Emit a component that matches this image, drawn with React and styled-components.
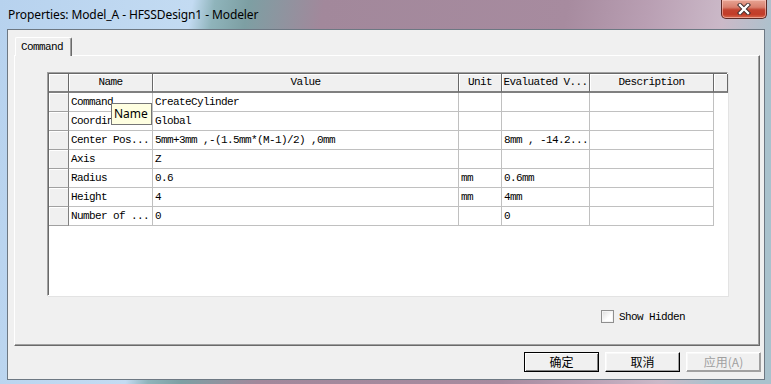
import React from "react";
import styled, { createGlobalStyle } from "styled-components";

const Global = createGlobalStyle`
  * { box-sizing: border-box; }
  html, body { margin: 0; padding: 0; overflow: hidden; }
  body { width: 771px; height: 384px; background: #b8d2ec; }
`;

const Window = styled.div`
  width: 771px;
  height: 384px;
  display: flex;
  flex-direction: column;
  padding: 0 6px 4px 7px;
  background:
    linear-gradient(180deg, rgba(255,255,255,0) 0, rgba(255,255,255,0) 29px, rgba(190,214,240,0.0) 29px),
    linear-gradient(100deg, #b7d2ee 0, #c3dbf2 190px, #8fb4bb 212px, #7d9fa3 245px, #a2889b 320px, #a78b9f 560px, #b99fb3 640px, #cbb9c8 715px, #a9c2cd 771px);
`;

const TitleBar = styled.div`
  height: 29px;
  display: flex;
  align-items: flex-start;
  justify-content: space-between;
  margin-left: -7px;
  margin-right: -6px;
  padding-left: 8px;
`;

const Title = styled.div`
  font-family: "Noto Sans", "Open Sans", sans-serif;
  font-size: 12px;
  line-height: 16px;
  margin-top: 7px;
  color: #000;
  letter-spacing: -0.1px;
`;

const CloseButton = styled.div`
  width: 46px;
  height: 19px;
  margin-right: 4px;
  border: 1px solid #5c2a26;
  border-top: none;
  border-radius: 0 0 5px 5px;
  background: linear-gradient(180deg, #e7a493 0, #d9806e 40%, #c2422f 55%, #c23c28 80%, #d76a4e 100%);
  box-shadow: inset 0 0 0 1px rgba(255, 210, 200, 0.55);
  display: flex;
  align-items: center;
  justify-content: center;
`;

const Client = styled.div`
  flex: 1;
  display: flex;
  flex-direction: column;
  background: #f0f0f0;
  border: 1px solid #6d7883;
  padding: 7px 3px 0 0;
`;

const TabStrip = styled.div`
  display: flex;
  padding-left: 7px;
  position: relative;
  z-index: 1;
`;

const Tab = styled.div`
  width: 57px;
  height: 19px;
  margin-bottom: -1px;
  background: #f0f0f0;
  border-left: 1px solid #ffffff;
  border-top: 1px solid #ffffff;
  border-right: 1px solid #6a6a6a;
  box-shadow: inset -1px 0 0 #a0a0a0;
  border-radius: 2px 2px 0 0;
  font-family: "Liberation Mono", "DejaVu Sans Mono", monospace;
  font-size: 11px;
  letter-spacing: -0.6px;
  line-height: 16px;
  padding-left: 5px;
  padding-top: 1px;
`;

const Panel = styled.div`
  margin-left: 6px;
  width: 746px;
  height: 291px;
  border-top: 1px solid #ffffff;
  border-left: 1px solid #ffffff;
  border-right: 1px solid #6a6a6a;
  border-bottom: 1px solid #6a6a6a;
  box-shadow: inset -1px -1px 0 #a0a0a0;
  display: flex;
  flex-direction: column;
  padding: 16px 0 0 32px;
`;

const Grid = styled.div`
  position: relative;
  width: 681px;
  height: 224px;
  background: #ffffff;
  border-top: 1px solid #a0a0a0;
  border-left: 1px solid #a0a0a0;
  border-right: 1px solid #ffffff;
  border-bottom: 1px solid #ffffff;
  box-shadow: inset 1px 1px 0 #696969, 1px 1px 0 #e3e3e3;
  padding: 1px 0 0 1px;
  font-family: "Liberation Mono", "DejaVu Sans Mono", monospace;
  font-size: 11px;
  letter-spacing: -0.6px;
  color: #000;
`;

const Row = styled.div`
  display: flex;
  height: 19px;
`;

const HeadCell = styled.div`
  width: ${(p) => p.w}px;
  flex: none;
  height: 19px;
  background: #f0f0f0;
  border-right: 1px solid #696969;
  border-bottom: 2px solid #808080;
  box-shadow: inset 1px 1px 0 #ffffff;
  text-align: center;
  line-height: 17px;
  white-space: nowrap;
  overflow: hidden;
`;

const RowHead = styled.div`
  width: 20px;
  flex: none;
  height: 19px;
  background: #f0f0f0;
  border-right: 1px solid #808080;
  border-bottom: 1px solid #a0a0a0;
  box-shadow: inset 1px 1px 0 #ffffff;
`;

const Cell = styled.div`
  width: ${(p) => p.w}px;
  flex: none;
  height: 19px;
  border-right: 1px solid #c0c0c0;
  border-bottom: 1px solid #c0c0c0;
  padding-left: 2px;
  line-height: 18px;
  white-space: nowrap;
  overflow: hidden;
`;

const Tooltip = styled.div`
  position: absolute;
  left: 63px;
  top: 30px;
  width: 41px;
  height: 22px;
  background: #ffffe1;
  border: 1px solid #767676;
  font-family: "Noto Sans", "Open Sans", sans-serif;
  font-size: 12px;
  letter-spacing: 0;
  line-height: 20px;
  padding-left: 2px;
  color: #000;
`;

const OptionRow = styled.div`
  display: flex;
  justify-content: flex-end;
  align-items: center;
  margin-top: 14px;
  margin-right: 74px;
  gap: 5px;
  font-family: "Liberation Mono", "DejaVu Sans Mono", monospace;
  font-size: 11px;
  letter-spacing: -0.6px;
`;

const CheckBox = styled.div`
  width: 13px;
  height: 13px;
  background: linear-gradient(135deg, #dcdcdc 0, #ffffff 60%);
  border: 1px solid #8f8f8f;
  box-shadow: inset 0 0 0 1px #f4f4f4;
`;

const ButtonRow = styled.div`
  display: flex;
  justify-content: flex-end;
  gap: 6px;
  margin-top: 6px;
  padding-right: 0;
`;

const Button = styled.div`
  width: 75px;
  height: 20px;
  background: #f0f0f0;
  border: 1px solid ${(p) => (p.primary ? "#000000" : "#ffffff")};
  border-right-color: ${(p) => (p.disabled ? "#a0a0a0" : "#000000")};
  border-bottom-color: ${(p) => (p.disabled ? "#a0a0a0" : "#000000")};
  box-shadow: ${(p) =>
    p.primary
      ? "inset 1px 1px 0 #ffffff, inset -1px -1px 0 #808080"
      : "inset -1px -1px 0 #a0a0a0, inset 1px 1px 0 #f8f8f8"};
  font-family: "Noto Sans CJK SC", "Noto Sans", sans-serif;
  font-size: 12px;
  line-height: 17px;
  text-align: center;
  color: ${(p) => (p.disabled ? "#a0a0a0" : "#000")};
`;

const cols = [84, 306, 43, 88, 124];
const headers = ["Name", "Value", "Unit", "Evaluated V...", "Description"];
const rows = [
  ["Command", "CreateCylinder", "", "", ""],
  ["Coordin", "Global", "", "", ""],
  ["Center Pos...", "5mm+3mm ,-(1.5mm*(M-1)/2) ,0mm", "", "8mm , -14.2...", ""],
  ["Axis", "Z", "", "", ""],
  ["Radius", "0.6", "mm", "0.6mm", ""],
  ["Height", "4", "mm", "4mm", ""],
  ["Number of ...", "0", "", "0", ""],
];

export default function App() {
  return (
    <>
      <Global />
      <Window>
        <TitleBar>
          <Title>Properties: Model_A - HFSSDesign1 - Modeler</Title>
          <CloseButton>
            <svg width="14" height="12" viewBox="0 0 14 12">
              <path d="M3 2 L11 10 M11 2 L3 10" stroke="#3a2a2a" strokeWidth="4.2" strokeLinecap="square" />
              <path d="M3 2 L11 10 M11 2 L3 10" stroke="#ffffff" strokeWidth="2.4" strokeLinecap="square" />
            </svg>
          </CloseButton>
        </TitleBar>
        <Client>
          <TabStrip>
            <Tab>Command</Tab>
          </TabStrip>
          <Panel>
            <Grid>
              <Row>
                <HeadCell w={20} />
                {headers.map((h, i) => (
                  <HeadCell key={h} w={cols[i]}>{h}</HeadCell>
                ))}
                <HeadCell w={14} />
              </Row>
              {rows.map((r, ri) => (
                <Row key={ri}>
                  <RowHead />
                  {r.map((v, i) => (
                    <Cell key={i} w={cols[i]}>{v}</Cell>
                  ))}
                </Row>
              ))}
              <Tooltip>Name</Tooltip>
            </Grid>
            <OptionRow>
              <CheckBox />
              <span>Show Hidden</span>
            </OptionRow>
          </Panel>
          <ButtonRow>
            <Button primary>确定</Button>
            <Button>取消</Button>
            <Button disabled>应用(A)</Button>
          </ButtonRow>
        </Client>
      </Window>
    </>
  );
}
